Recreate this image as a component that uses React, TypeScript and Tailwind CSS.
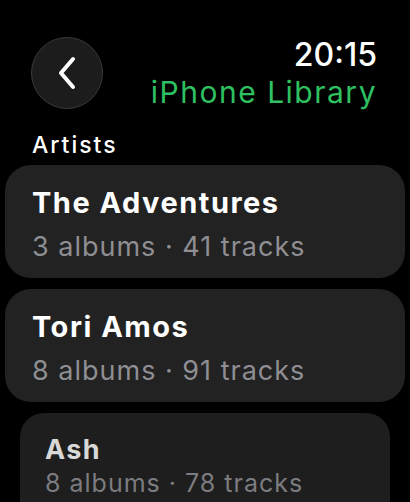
import React from "react";

const items = [
  { name: "The Adventures", sub: "3 albums · 41 tracks" },
  { name: "Tori Amos", sub: "8 albums · 91 tracks" },
];

export default function App() {
  return (
    <div
      className="w-[410px] h-[502px] bg-black overflow-hidden text-white"
      style={{ fontFamily: "Inter, 'Noto Sans', sans-serif" }}
    >
      <div className="flex justify-between items-start pl-[31px] pr-[33px] pt-[37px]">
        <button className="w-[72px] h-[72px] rounded-full bg-[#1c1c1c] border-[1.5px] border-[#3a3a3a] flex items-center justify-center">
          <svg width="22" height="34" viewBox="0 0 22 34" fill="none">
            <path
              d="M17 3 L5 17 L17 31"
              stroke="white"
              strokeWidth="4"
              strokeLinecap="round"
              strokeLinejoin="round"
            />
          </svg>
        </button>
        <div className="flex flex-col items-end mt-[1px]">
          <div className="text-[32px] leading-[34px] font-medium">20:15</div>
          <div className="text-[30px] leading-[34px] text-[#2ec061] mt-[3px] tracking-[1.5px]">iPhone Library</div>
        </div>
      </div>
      <div className="pl-[32px] mt-[22px] text-[23px] leading-[28px] font-medium tracking-[2px]">Artists</div>
      <div className="flex flex-col gap-[11px] mt-[6px]">
        {items.map((it) => (
          <div
            key={it.name}
            className="mx-[5px] h-[113px] rounded-[26px] bg-[#222222] pl-[27px] pt-[20px] flex flex-col"
          >
            <div className="text-[29px] leading-[36px] font-bold tracking-[1.5px]">{it.name}</div>
            <div className="text-[27px] leading-[34px] text-[#8e8e93] mt-[9px] tracking-[1px]">{it.sub}</div>
          </div>
        ))}
        <div className="mx-[20px] h-[113px] rounded-[24px] bg-[#1e1e1e] pl-[25px] pt-[20px] flex flex-col">
          <div className="text-[27px] leading-[34px] font-bold text-[#d8d8d8] tracking-[1.4px]">Ash</div>
          <div className="text-[25px] leading-[32px] text-[#7c7c80] tracking-[1px]">8 albums · 78 tracks</div>
        </div>
      </div>
    </div>
  );
}
